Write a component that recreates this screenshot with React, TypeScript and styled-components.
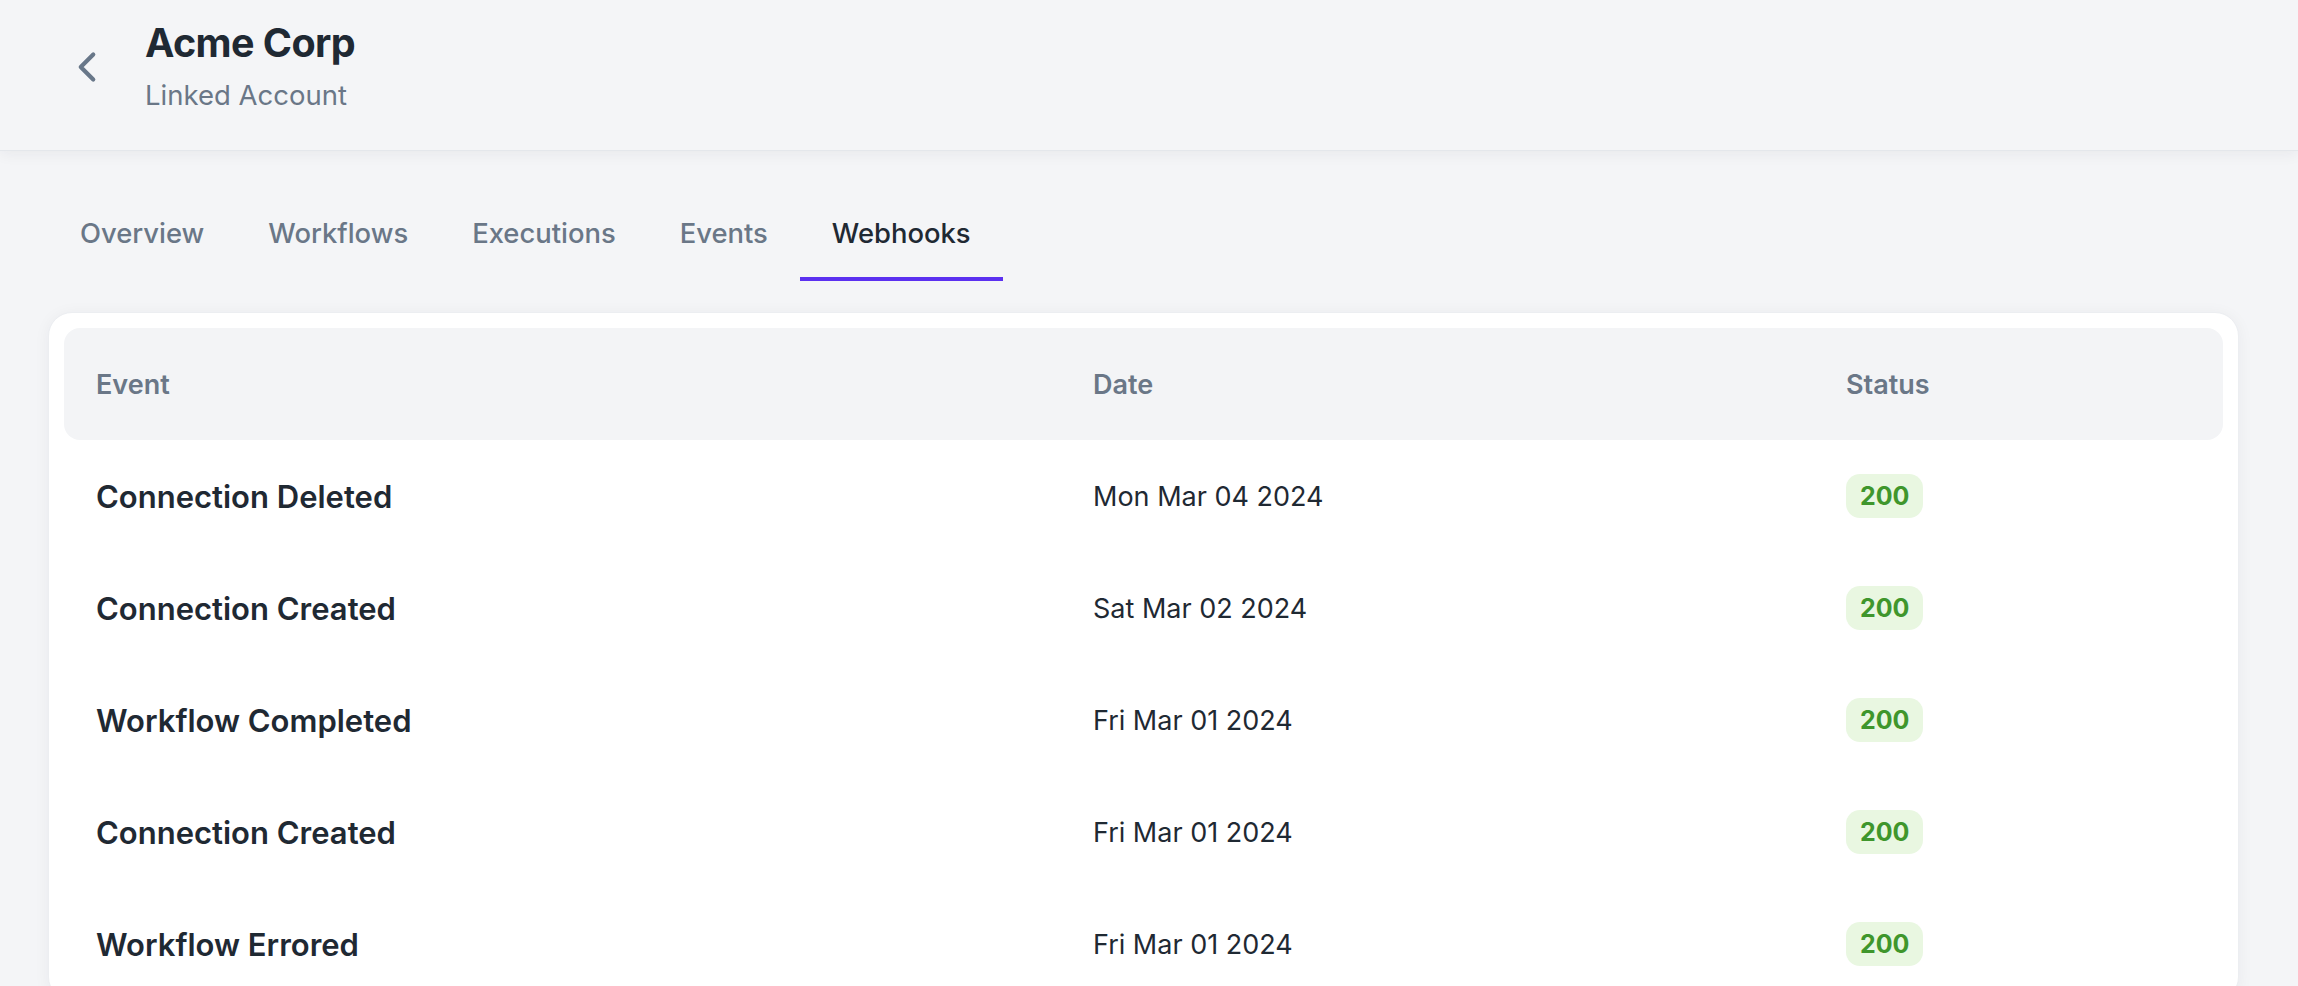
import React from "react";
import styled, { createGlobalStyle } from "styled-components";
import { ChevronLeft } from "lucide-react";

const GlobalStyle = createGlobalStyle`
  html, body {
    margin: 0;
    padding: 0;
    background: #f4f5f7;
    font-family: Inter, "Noto Sans", "Liberation Sans", sans-serif;
    -webkit-font-smoothing: antialiased;
  }
  * { box-sizing: border-box; }
`;

const Page = styled.div`
  min-height: 986px;
  background: #f4f5f7;
  overflow: hidden;
`;

const Header = styled.header`
  height: 150px;
  display: flex;
  align-items: center;
  gap: 33px;
  padding: 0 0 16px 62px;
  background: #f4f5f7;
  box-shadow: 0 1px 0 #e4e7eb, 0 4px 14px rgba(30, 41, 59, 0.06);
  position: relative;
  z-index: 1;
`;

const BackButton = styled.button`
  display: flex;
  align-items: center;
  justify-content: center;
  width: 50px;
  height: 50px;
  padding: 0;
  border: none;
  background: none;
  color: #687789;
  cursor: pointer;
`;

const TitleBlock = styled.div`
  display: flex;
  flex-direction: column;
  gap: 8px;
`;

const Title = styled.h1`
  margin: 0;
  font-size: 39.5px;
  line-height: 48px;
  font-weight: 700;
  color: #1f2933;
  letter-spacing: -0.6px;
`;

const Subtitle = styled.div`
  font-size: 27.5px;
  line-height: 40px;
  font-weight: 400;
  color: #6a7787;
`;

const Main = styled.main`
  padding: 39px 59px 0 48px;
`;

const Tabs = styled.nav`
  display: flex;
  align-items: flex-end;
`;

const Tab = styled.button<{ $active?: boolean }>`
  padding: 24px 32px 24px;
  border: none;
  border-bottom: 4px solid ${(p) => (p.$active ? "#5b30f0" : "transparent")};
  background: none;
  font-family: inherit;
  font-size: 27.4px;
  line-height: 40px;
  font-weight: 500;
  color: ${(p) => (p.$active ? "#1f2933" : "#6a7787")};
  cursor: pointer;
`;

const Card = styled.section`
  margin-top: 31px;
  background: #ffffff;
  border: 1px solid #eceef1;
  border-radius: 24px;
  padding: 15px 15px 0;
  box-shadow: 0 2px 16px rgba(30, 41, 59, 0.05);
`;

const Row = styled.div`
  display: grid;
  grid-template-columns: 997px 753px 1fr;
  align-items: center;
  height: 112px;
`;

const HeadRow = styled(Row)`
  background: #f3f4f6;
  border-radius: 16px;
`;

const HeadCell = styled.div`
  padding: 0 32px;
  font-size: 27px;
  font-weight: 600;
  color: #6a7787;
`;

const EventCell = styled.div`
  padding: 0 32px;
  font-size: 31px;
  font-weight: 600;
  color: #1f2933;
`;

const DateCell = styled.div`
  padding: 0 32px;
  font-size: 27px;
  font-weight: 400;
  color: #1f2933;
`;

const StatusCell = styled.div`
  padding: 0 32px;
`;

const Badge = styled.span`
  display: inline-flex;
  align-items: center;
  justify-content: center;
  height: 44px;
  padding: 0 14px;
  border-radius: 14px;
  background: #e9f7e1;
  color: #3f962c;
  font-size: 25px;
  font-weight: 700;
`;

const rows = [
  { event: "Connection Deleted", date: "Mon Mar 04 2024", status: "200" },
  { event: "Connection Created", date: "Sat Mar 02 2024", status: "200" },
  { event: "Workflow Completed", date: "Fri Mar 01 2024", status: "200" },
  { event: "Connection Created", date: "Fri Mar 01 2024", status: "200" },
  { event: "Workflow Errored", date: "Fri Mar 01 2024", status: "200" },
];

const tabs = ["Overview", "Workflows", "Executions", "Events", "Webhooks"];

export default function App() {
  return (
    <Page>
      <GlobalStyle />
      <Header>
        <BackButton aria-label="Back">
          <ChevronLeft size={50} strokeWidth={2} />
        </BackButton>
        <TitleBlock>
          <Title>Acme Corp</Title>
          <Subtitle>Linked Account</Subtitle>
        </TitleBlock>
      </Header>
      <Main>
        <Tabs>
          {tabs.map((t) => (
            <Tab key={t} $active={t === "Webhooks"}>
              {t}
            </Tab>
          ))}
        </Tabs>
        <Card>
          <HeadRow>
            <HeadCell>Event</HeadCell>
            <HeadCell>Date</HeadCell>
            <HeadCell>Status</HeadCell>
          </HeadRow>
          {rows.map((r, i) => (
            <Row key={i}>
              <EventCell>{r.event}</EventCell>
              <DateCell>{r.date}</DateCell>
              <StatusCell>
                <Badge>{r.status}</Badge>
              </StatusCell>
            </Row>
          ))}
        </Card>
      </Main>
    </Page>
  );
}
